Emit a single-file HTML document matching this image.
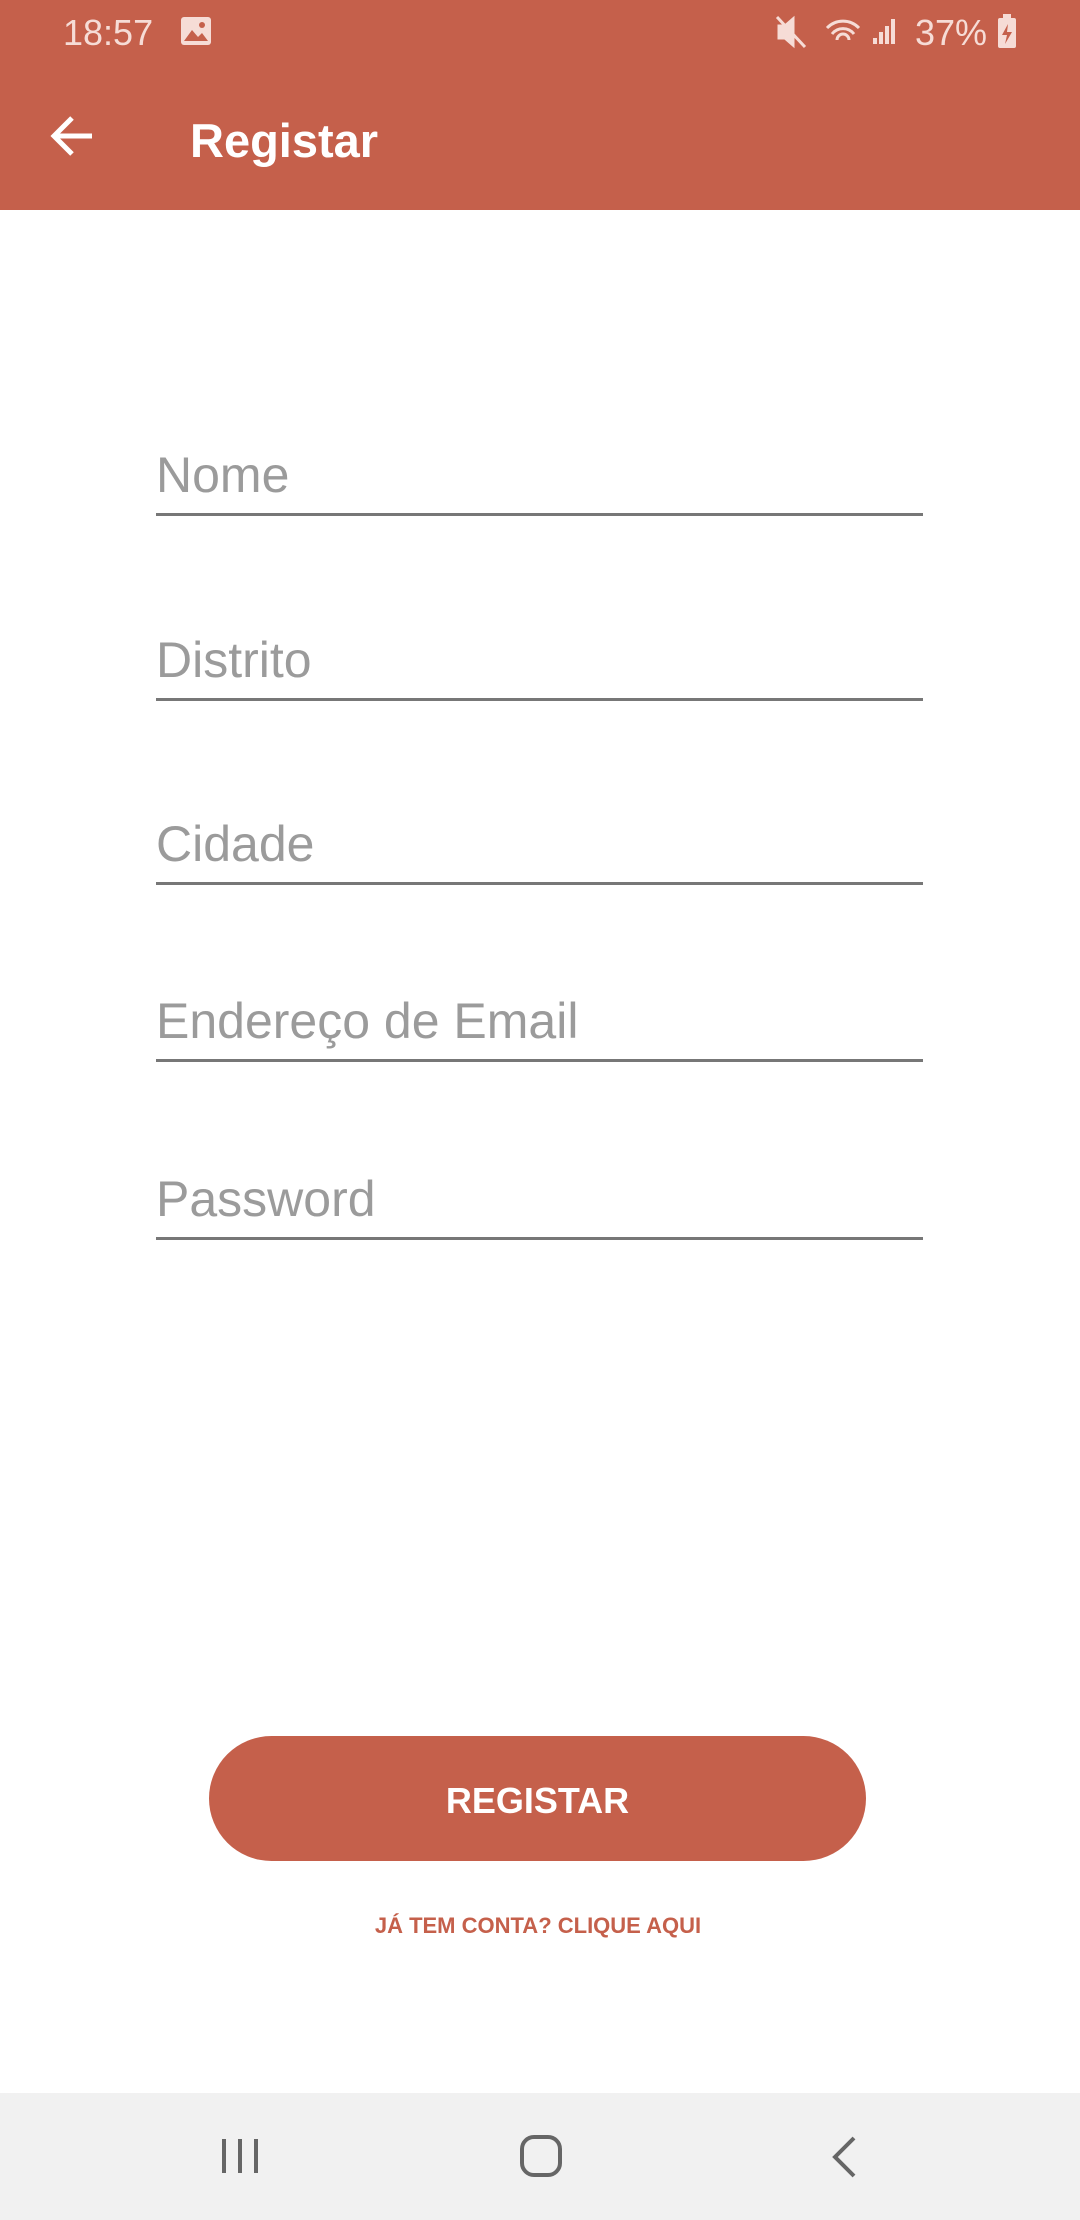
<!DOCTYPE html>
<html><head><meta charset="utf-8"><style>
*{margin:0;padding:0;box-sizing:border-box}
body{width:1080px;height:2220px;background:#fff;position:relative;font-family:"Liberation Sans",Roboto,sans-serif;overflow:hidden}
.hdr{position:absolute;left:0;top:0;width:1080px;height:210px;background:#c5604b}
.st{position:absolute;top:12px;color:#f6dcd6;font-size:36px}
.title{position:absolute;left:190px;top:113px;color:#fff;font-size:47px;font-weight:bold}
.f{position:absolute;left:156px;width:767px;border-bottom:3px solid #777;color:#9b9b9b;font-size:50px;padding-bottom:9px}
.btn{position:absolute;left:209px;top:1736px;width:657px;height:125px;border-radius:63px;background:#c5604b;color:#fff;font-size:36px;font-weight:bold;text-align:center;line-height:130px}
.lnk{position:absolute;left:0;width:1076px;top:1913px;text-align:center;color:#c5604b;font-size:22px;font-weight:bold}
.nav{position:absolute;left:0;top:2093px;width:1080px;height:127px;background:#f1f1f1}
</style></head><body>
<div class="hdr">
<div class="st" style="left:63px">18:57</div>
<svg style="position:absolute;left:180px;top:16px" width="32" height="30" viewBox="0 0 32 30"><rect x="1" y="1" width="30" height="28" rx="3" fill="#f6dcd6"/><path d="M4 25 L12 14 L18 21 L22 17 L28 25 Z" fill="#c5604b"/><circle cx="22" cy="9" r="3" fill="#c5604b"/></svg>
<div class="st" style="left:915px">37%</div>
<svg style="position:absolute;left:775px;top:14px" width="130" height="36" viewBox="0 0 130 36" fill="none" stroke="#f6dcd6" stroke-width="3"><path d="M4 12h6l8-7v26l-8-7H4z" fill="#f6dcd6"/><path d="M2 3l28 30"/><path d="M52 14a22 22 0 0 1 32 0M57 20a14 14 0 0 1 22 0M62 26a6 6 0 0 1 12 0"/><path d="M100 30V24M106 30V18M112 30V12M118 30V5" stroke-width="4"/></svg>
<svg style="position:absolute;left:996px;top:14px" width="22" height="36" viewBox="0 0 22 36"><rect x="2" y="4" width="18" height="30" rx="2" fill="#f6dcd6"/><rect x="7" y="0" width="8" height="5" fill="#f6dcd6"/><path d="M12 10l-6 11h5l-2 9 7-12h-5z" fill="#c5604b"/></svg>
<svg style="position:absolute;left:48px;top:114px" width="46" height="44" viewBox="0 0 46 44" fill="none" stroke="#fff" stroke-width="5"><path d="M44 22H6M24 4L6 22l18 18"/></svg>
<div class="title">Registar</div>
</div>
<div class="f" style="top:446px">Nome</div>
<div class="f" style="top:631px">Distrito</div>
<div class="f" style="top:815px">Cidade</div>
<div class="f" style="top:992px">Endereço de Email</div>
<div class="f" style="top:1170px">Password</div>
<div class="btn">REGISTAR</div>
<div class="lnk">JÁ TEM CONTA? CLIQUE AQUI</div>
<div class="nav">
<svg style="position:absolute;left:220px;top:44px" width="40" height="38" viewBox="0 0 40 38" stroke="#666" stroke-width="4"><path d="M4 2v34M20 2v34M36 2v34"/></svg>
<svg style="position:absolute;left:519px;top:41px" width="44" height="44" viewBox="0 0 44 44" fill="none" stroke="#666" stroke-width="4"><rect x="3" y="3" width="38" height="38" rx="12"/></svg>
<svg style="position:absolute;left:830px;top:42px" width="28" height="44" viewBox="0 0 28 44" fill="none" stroke="#666" stroke-width="4"><path d="M24 3L5 22l19 19"/></svg>
</div>
</body></html>
